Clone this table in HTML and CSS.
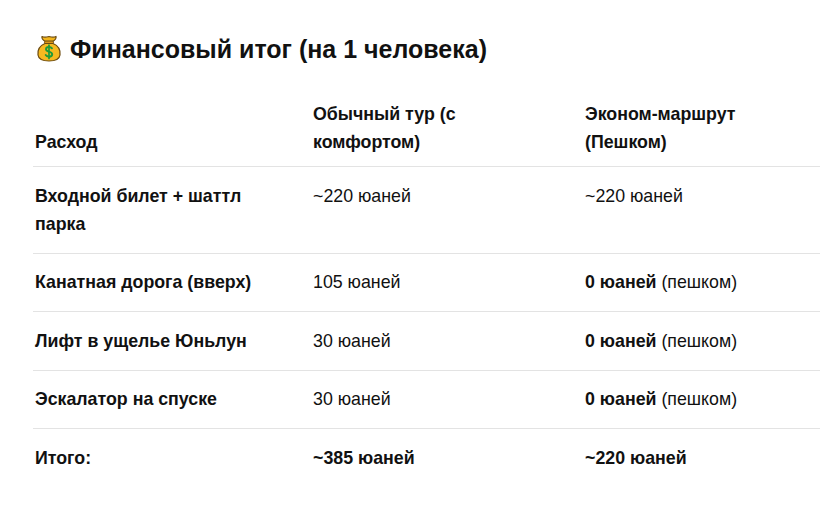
FILE: index.html
```html
<!DOCTYPE html>
<html lang="ru">
<head>
<meta charset="utf-8">
<link rel="stylesheet" href="styles.css">
</head>
<body>
<div class="page">
  <h2 class="title">
    <svg class="bag" width="26" height="28" viewBox="0 0 26 28" aria-hidden="true">
      <path d="M6 2.5 C9 4 11 3 13 2.5 C15 3 17 4 20 2.5 C20.5 4.5 18.5 6.5 16.5 7.5 L9.5 7.5 C7.5 6.5 5.5 4.5 6 2.5 Z" fill="#f2b51c" stroke="#6b4a10" stroke-width="1.2" stroke-linejoin="round"/>
      <rect x="8.5" y="7" width="9" height="2.6" rx="1.2" fill="#d9951a" stroke="#6b4a10" stroke-width="1"/>
      <path d="M9 9.5 C3 12 1.5 17 2 21 C2.6 25.5 7 27 13 27 C19 27 23.4 25.5 24 21 C24.5 17 23 12 17 9.5 Z" fill="#f5b920" stroke="#6b4a10" stroke-width="1.2" stroke-linejoin="round"/>
      <path d="M16 14.3 C15.3 13.4 14.3 13 13 13 C11.2 13 10 13.9 10 15.3 C10 18.4 16.2 17 16.2 20.3 C16.2 21.8 14.8 22.7 13 22.7 C11.5 22.7 10.3 22.1 9.7 21.1" fill="none" stroke="#1f9a3a" stroke-width="1.9" stroke-linecap="round"/>
      <path d="M13 11.2 V24.4" stroke="#1f9a3a" stroke-width="1.7" stroke-linecap="round"/>
    </svg>
    <span>Финансовый итог (на 1 человека)</span>
  </h2>
  <table class="costs">
    <colgroup>
      <col class="c1"><col class="c2"><col class="c3">
    </colgroup>
    <thead>
      <tr>
        <th>Расход</th>
        <th>Обычный тур (с комфортом)</th>
        <th>Эконом-маршрут (Пешком)</th>
      </tr>
    </thead>
    <tbody>
      <tr>
        <td class="name">Входной билет + шаттл парка</td>
        <td>~220 юаней</td>
        <td>~220 юаней</td>
      </tr>
      <tr>
        <td class="name">Канатная дорога (вверх)</td>
        <td>105 юаней</td>
        <td><b>0 юаней</b> (пешком)</td>
      </tr>
      <tr>
        <td class="name">Лифт в ущелье Юньлун</td>
        <td>30 юаней</td>
        <td><b>0 юаней</b> (пешком)</td>
      </tr>
      <tr>
        <td class="name">Эскалатор на спуске</td>
        <td>30 юаней</td>
        <td><b>0 юаней</b> (пешком)</td>
      </tr>
      <tr class="total">
        <td class="name">Итого:</td>
        <td><b>~385 юаней</b></td>
        <td><b>~220 юаней</b></td>
      </tr>
    </tbody>
  </table>
</div>
</body>
</html>
```

FILE: styles.css
```css
html, body {
  margin: 0;
  padding: 0;
  background: #ffffff;
  overflow: hidden;
}

body {
  font-family: "Liberation Sans", Arial, sans-serif;
  color: #111111;
}

.page {
  padding: 34px 0 0 33px;
}

.title {
  display: flex;
  align-items: center;
  gap: 8px;
  margin: 0 0 23px 3px;
  font-size: 25px;
  font-weight: bold;
  line-height: 30px;
  color: #111111;
}

.bag {
  flex: none;
  margin-top: -2px;
}

.costs {
  border-collapse: collapse;
  table-layout: fixed;
  width: 787px;
  font-size: 17.8px;
  line-height: 28px;
}

.c1 { width: 278px; }
.c2 { width: 272px; }

.costs th {
  text-align: left;
  vertical-align: bottom;
  font-weight: bold;
  padding: 13px 20px 10px 2px;
  border-bottom: 1px solid #e3e3e3;
}

.costs td {
  text-align: left;
  vertical-align: top;
  padding: 14.5px 20px 15px 2px;
  border-bottom: 1px solid #e3e3e3;
}

.costs .name {
  font-weight: bold;
}

.costs tr.total td {
  border-bottom: none;
}
```
